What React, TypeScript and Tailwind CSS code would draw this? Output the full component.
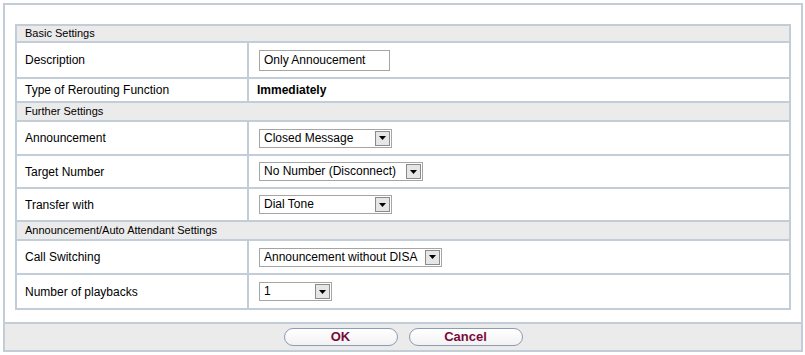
const font = "font-['Liberation_Sans',Arial,sans-serif]";

// heights include the 2px divider line on top of every row but the first
type Row =
  | { kind: "header"; title: string; h: string }
  | { kind: "input"; label: string; value: string; width: number; h: string }
  | { kind: "text"; label: string; value: string; h: string }
  | { kind: "select"; label: string; value: string; width: number; h: string };

const rows: Row[] = [
  { kind: "header", title: "Basic Settings", h: "h-[17px]" },
  { kind: "input", label: "Description", value: "Only Annoucement", width: 131, h: "h-[36px]" },
  { kind: "text", label: "Type of Rerouting Function", value: "Immediately", h: "h-[24px]" },
  { kind: "header", title: "Further Settings", h: "h-[19px]" },
  { kind: "select", label: "Announcement", value: "Closed Message", width: 133, h: "h-[34px]" },
  { kind: "select", label: "Target Number", value: "No Number (Disconnect)", width: 164, h: "h-[33px]" },
  { kind: "select", label: "Transfer with", value: "Dial Tone", width: 133, h: "h-[33px]" },
  { kind: "header", title: "Announcement/Auto Attendant Settings", h: "h-[19px]" },
  { kind: "select", label: "Call Switching", value: "Announcement without DISA", width: 183, h: "h-[34px]" },
  { kind: "select", label: "Number of playbacks", value: "1", width: 73, h: "h-[33px]" },
];

const Select = ({ value, width }: { value: string; width: number }) => (
  <div
    className="flex h-[19px] items-stretch border border-[#a5a5a5] bg-white"
    style={{ width }}
  >
    <span className="flex-1 truncate pl-[4px] text-[12px] leading-[17px] text-black">{value}</span>
    <span className="m-[1px] flex w-[15px] items-center justify-center border border-[#8a8a8a] bg-[#e6e6e6]">
      <svg width="7" height="4" viewBox="0 0 7 4">
        <path d="M0 0h7L3.5 4z" fill="#000" />
      </svg>
    </span>
  </div>
);

export default function App() {
  return (
    <div className={`${font} h-[355px] w-[805px] bg-white pl-[3px] pt-[3px]`}>
      <div className="flex h-[349px] w-[800px] flex-col border-2 border-[#c3cdd8]">
        <div className="px-[10px] pb-[12px] pt-[19px]">
          <div className="flex w-[776px] flex-col divide-y-2 divide-[#c3cdd8] border-2 border-[#c3cdd8]">
            {rows.map((r, i) => {
              if (r.kind === "header") {
                return (
                  <div key={i} className={`flex ${r.h} items-center bg-[#ebebeb] pl-[8px] text-[11px] text-black`}>
                    {r.title}
                  </div>
                );
              }
              return (
                <div key={i} className={`flex ${r.h}`}>
                  <div className="flex w-[232px] items-center border-r-2 border-[#c3cdd8] pl-[8px] text-[12px] text-black">
                    {r.label}
                  </div>
                  <div className="flex flex-1 items-center pl-[8px]">
                    {r.kind === "input" && (
                      <div
                        className="ml-[2px] flex h-[21px] items-center border border-[#a5a5a5] pl-[4px] text-[12px] text-black"
                        style={{ width: r.width }}
                      >
                        {r.value}
                      </div>
                    )}
                    {r.kind === "text" && <span className="text-[12px] font-bold text-black">{r.value}</span>}
                    {r.kind === "select" && (
                      <div className="ml-[2px]">
                        <Select value={r.value} width={r.width} />
                      </div>
                    )}
                  </div>
                </div>
              );
            })}
          </div>
        </div>
        <div className="flex flex-1 items-center justify-center gap-[11px] border-t-2 border-[#c3cdd8] bg-[#ebebeb]">
          {["OK", "Cancel"].map((b) => (
            <button
              key={b}
              className="flex h-[18px] w-[114px] items-center justify-center rounded-full border border-[#8a9db3] bg-gradient-to-b from-white to-[#f2f2f2] text-[13px] font-bold text-[#7a0a3c]"
            >
              {b}
            </button>
          ))}
        </div>
      </div>
    </div>
  );
}
